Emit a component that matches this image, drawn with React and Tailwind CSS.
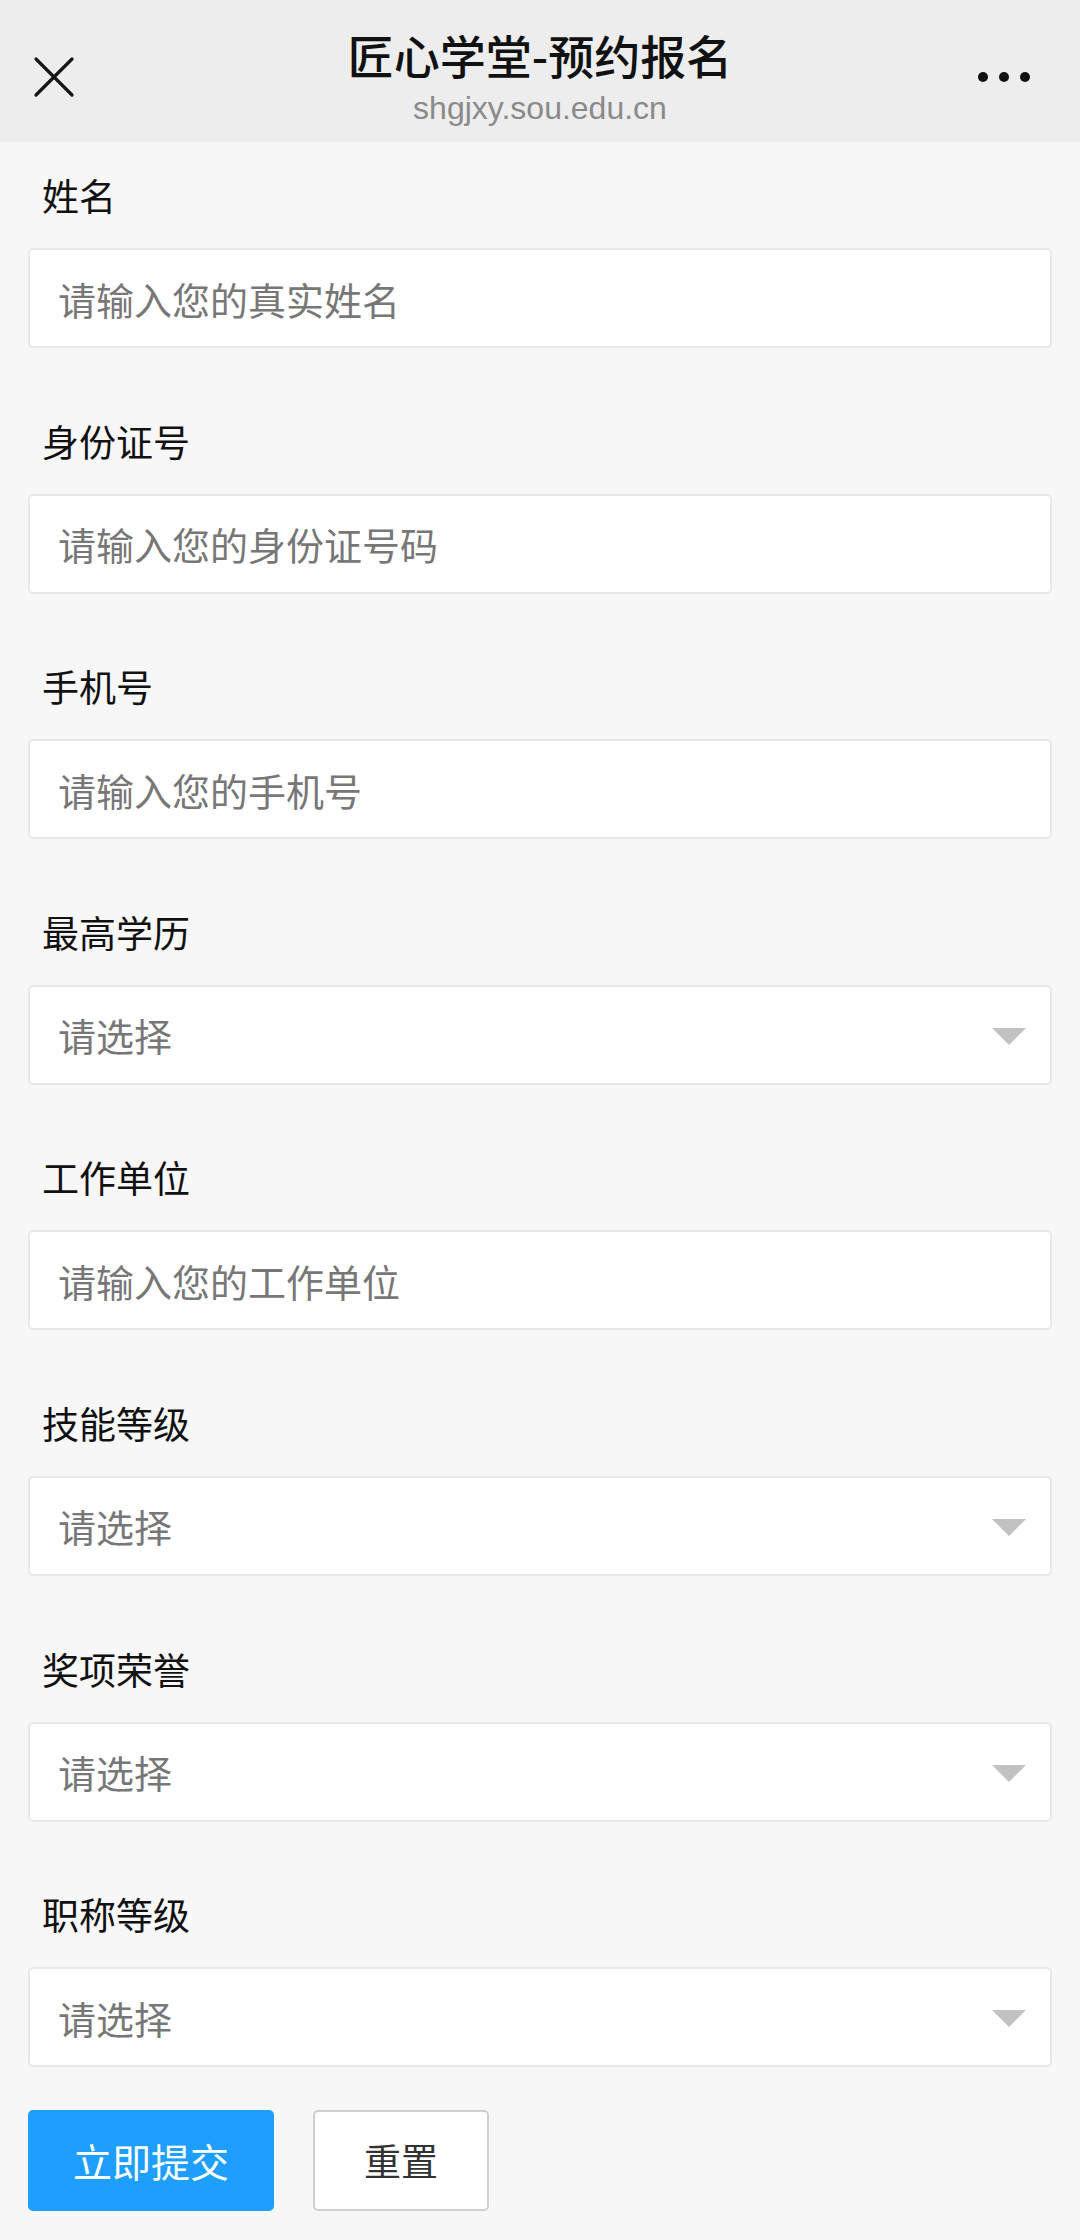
import { useState } from "react";

const fields = [
  { id: "name", label: "姓名", placeholder: "请输入您的真实姓名" },
  { id: "idcard", label: "身份证号", placeholder: "请输入您的身份证号码" },
  { id: "phone", label: "手机号", placeholder: "请输入您的手机号" },
  { id: "education", label: "最高学历", select: true },
  { id: "company", label: "工作单位", placeholder: "请输入您的工作单位" },
  { id: "skill", label: "技能等级", select: true },
  { id: "award", label: "奖项荣誉", select: true },
  { id: "title", label: "职称等级", select: true },
];

const cjk = "font-['Noto_Sans_CJK_SC','Noto_Sans',sans-serif]";

function App() {
  const [form, setForm] = useState({});

  return (
    <div className={`min-h-[2240px] w-[1080px] bg-[#f7f7f7] ${cjk}`}>
      <header className="relative flex h-[142px] flex-col items-center bg-[#ededed] pt-[24px]">
        <button className="absolute left-[32px] top-[55px] text-[#161616]" aria-label="关闭">
          <svg width="44" height="44" viewBox="0 0 44 44" fill="none" stroke="currentColor" strokeWidth="3.2" strokeLinecap="round">
            <path d="M4 4 L40 40 M40 4 L4 40" />
          </svg>
        </button>
        <h1 className="text-[46px] font-medium leading-[60px] text-[#111]">匠心学堂-预约报名</h1>
        <p className="mt-[6px] font-['Liberation_Sans',Arial,sans-serif] text-[32px] leading-[36px] text-[#8a8a8a]">
          shgjxy.sou.edu.cn
        </p>
        <div className="absolute right-[50px] top-[72px] flex gap-[11px]">
          <span className="h-[10px] w-[10px] rounded-full bg-[#111]" />
          <span className="h-[10px] w-[10px] rounded-full bg-[#111]" />
          <span className="h-[10px] w-[10px] rounded-full bg-[#111]" />
        </div>
      </header>

      <form className="px-[28px] pt-[29px]" onSubmit={(event) => event.preventDefault()}>
        {fields.map((field, index) => (
          <div key={field.id} className={index === 0 ? "" : "mt-[68.6px]"}>
            <label htmlFor={field.id} className="block pl-[14px] text-[37px] leading-[48px] text-[#111]">
              {field.label}
            </label>
            {field.select ? (
              <div className="relative mt-[29px] flex h-[100px] items-center rounded-[5px] border-2 border-[#e8e8e8] bg-white pl-[28px]">
                <span className="text-[38px] text-[#777]">请选择</span>
                <span className="absolute right-[24px] top-[41px] h-0 w-0 border-x-[17px] border-t-[17px] border-x-transparent border-t-[#c2c2c2]" />
              </div>
            ) : (
              <input
                id={field.id}
                value={form[field.id] || ""}
                onChange={(event) => setForm((current) => ({ ...current, [field.id]: event.target.value }))}
                placeholder={field.placeholder}
                className="mt-[29px] block h-[100px] w-full rounded-[5px] border-2 border-[#e8e8e8] bg-white pl-[28px] text-[38px] text-[#333] outline-none placeholder:text-[#777]"
              />
            )}
          </div>
        ))}

        <div className="mt-[43px] flex gap-[39px]">
          <button type="submit" className="h-[101px] w-[246px] rounded-[5px] bg-[#1e9fff] text-[39px] text-white">
            立即提交
          </button>
          <button
            type="reset"
            onClick={() => setForm({})}
            className="h-[101px] w-[176px] rounded-[5px] border-2 border-[#cfcfcf] bg-white text-[37px] text-[#333]"
          >
            重置
          </button>
        </div>
      </form>
    </div>
  );
}

export default App;
